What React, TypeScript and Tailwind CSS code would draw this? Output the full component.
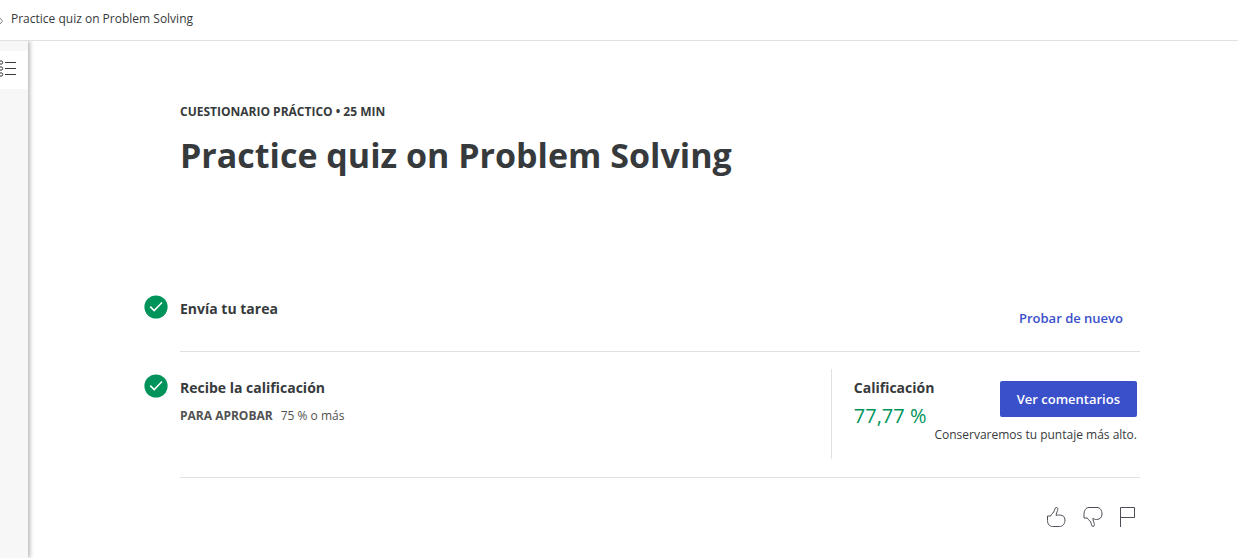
import type { ReactNode } from 'react';

function CheckBadge() {
  return (
    <svg className="h-6 w-6 shrink-0" viewBox="0 0 24 24" fill="none" aria-hidden="true">
      <circle cx="12" cy="12" r="11.6" fill="#00945b" />
      <path d="M6.200 11.600l4 4 7.800-8" stroke="#fff" strokeWidth="1.5" />
    </svg>
  );
}

function Step({ title, children, aside }: { title: string; children?: ReactNode; aside: ReactNode }) {
  return (
    <section className="-ml-9 flex">
      <div className="w-9 shrink-0 pt-[22px]">
        <CheckBadge />
      </div>
      <div className="flex grow border-b border-[#e1e1e1] pt-[17px] pb-[18px]">
        <div className="grow pt-[9px]">
          <h2 className="text-sm leading-5 font-bold">{title}</h2>
          {children}
        </div>
        {aside}
      </div>
    </section>
  );
}

function IconButton({ label, children }: { label: string; children: ReactNode }) {
  return (
    <button type="button" aria-label={label} className="h-6 w-6">
      <svg className="h-6 w-6" viewBox="0 0 24 24" fill="none" stroke="#4c4d57" strokeWidth="1">
        {children}
      </svg>
    </button>
  );
}

export default function App() {
  return (
    <div className="flex min-h-screen flex-col bg-white font-['Open_Sans',sans-serif] text-[#373a3c]">
      <header className="border-b border-[#e1e1e1]">
        <nav aria-label="Breadcrumb" className="flex h-10 items-center gap-2 pb-[3px] text-xs leading-[17px]">
          <svg className="mt-1 h-2 w-[3px]" viewBox="0 0 3 8" fill="none" stroke="#888" aria-hidden="true">
            <path d="M0 1l2.5 3L0 7" />
          </svg>
          <span>Practice quiz on Problem Solving</span>
        </nav>
      </header>
      <div className="flex grow">
        <aside className="w-7 shrink-0 bg-[#f7f7f7] pt-[10px] shadow-[2px_0_4px_rgba(0,0,0,0.28)] [clip-path:inset(0_-8px_0_0)]">
          <button type="button" aria-label="Menu" className="flex h-[38px] w-full items-center bg-white">
            <svg className="h-5 w-5" viewBox="0 0 20 20" fill="none" stroke="#373a3c">
              <path d="M5 2.500h11M5 8.500h11M5 14.500h11" />
              <circle cx="1" cy="2.500" r="1.700" />
              <circle cx="1" cy="8.500" r="1.700" />
              <circle cx="1" cy="14.500" r="1.700" />
            </svg>
          </button>
        </aside>
        <main className="grow pt-[62px] pr-[98px] pl-[152px]">
          <p className="text-xs leading-[18px] font-bold">CUESTIONARIO PRÁCTICO • 25 MIN</p>
          <h1 className="mt-[10px] mb-[94px] text-[34px] leading-[48px] font-bold">
            Practice quiz on Problem Solving
          </h1>
          <Step
            title="Envía tu tarea"
            aside={
              <div className="flex h-[43px] items-end pr-[17px] pb-[5px]">
                <button type="button" className="text-[13px] leading-5 font-semibold text-[#3a50cb]">
                  Probar de nuevo
                </button>
              </div>
            }
          />
          <Step
            title="Recibe la calificación"
            aside={
              <div className="flex h-[90px] border-l border-[#e1e1e1] pr-[3px] pl-[22px]">
                <div className="pt-[9px]">
                  <h3 className="text-sm leading-5 font-bold">Calificación</h3>
                  <p className="mt-1 text-xl leading-7 text-[#00945b]">77,77 %</p>
                </div>
                <div className="flex flex-col items-end pt-3">
                  <button
                    type="button"
                    className="h-9 rounded-xs bg-[#3a50cb] px-[17px] text-[13px] leading-5 font-semibold text-white"
                  >
                    Ver comentarios
                  </button>
                  <p className="mt-[9px] text-xs leading-[18px]">Conservaremos tu puntaje más alto.</p>
                </div>
              </div>
            }
          >
            <p className="mt-[9px] flex gap-2 text-xs leading-[18px] text-[#525252]">
              <strong className="font-bold">PARA APROBAR</strong>
              <span>75 % o más</span>
            </p>
          </Step>
          <div className="flex justify-end gap-3 pt-[27px] pr-[1px]">
            <IconButton label="Me gusta">
              <path d="M4.500 11h3.200c.4-1.800 2.100-2.500 3-4 .9-1.500 1.100-4.500 2.600-4.500 1.700 0 1.700 1.700 1.200 3.200-.5 1.600-1.400 2.700-1.300 4.800 1-.4 1.700-.5 3.300-.5 3.500 0 5.500 2 5.500 5 0 3.800-2.300 6.500-5.500 6.500H9.500c-3 0-5-2.500-5-6z" />
            </IconButton>
            <IconButton label="No me gusta">
              <path d="M5 13h3.300c.5 1.700 2.600 2.300 3.400 4 .6 1.300.8 4.500 2.300 4.500 1.500 0 1.500-1.700 1.200-3-.3-1.700-1.200-2.700-1.300-5.300h.2c.8.9 1.700 1.300 3.400 1.300 3.600 0 5.500-2.300 5.500-5.500 0-4-2-6.500-5-6.500h-8C6.800 2.500 5 5.500 5 9.500z" />
            </IconButton>
            <IconButton label="Informar un problema">
              <path d="M5.500 22V2.500h14v10h-14" />
            </IconButton>
          </div>
        </main>
      </div>
    </div>
  );
}
